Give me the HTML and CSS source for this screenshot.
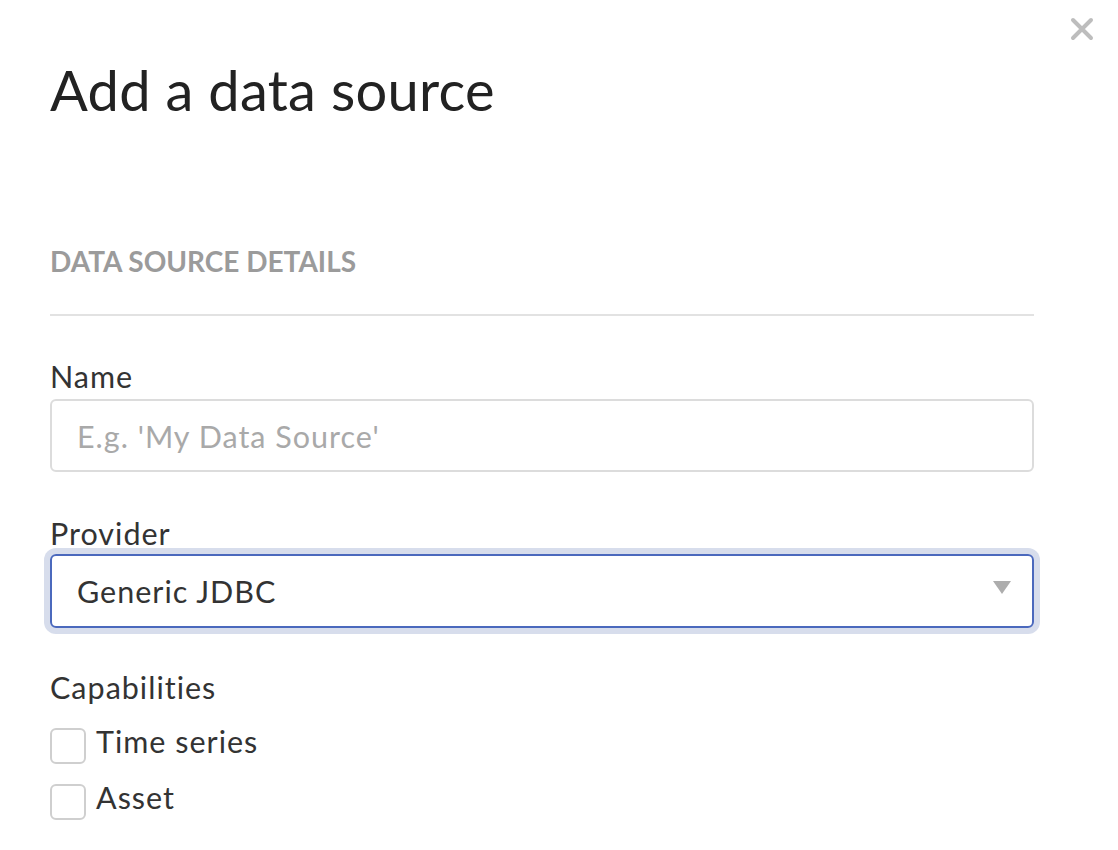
FILE: index.html
```html
<!DOCTYPE html>
<html lang="en">
<head>
<meta charset="utf-8">
<title>Add a data source</title>
<link rel="stylesheet" href="styles.css">
</head>
<body>
<div class="modal">
  <button class="close" aria-label="Close">
    <svg width="24" height="24" viewBox="0 0 24 24"><path d="M3 3 L21 21 M21 3 L3 21" stroke="#bdbdbd" stroke-width="4" stroke-linecap="round" fill="none"/></svg>
  </button>
  <h1 class="title">Add a data source</h1>
  <h2 class="section-title">DATA SOURCE DETAILS</h2>
  <div class="field field-first">
    <label class="label">Name</label>
    <div class="input placeholder">E.g. 'My Data Source'</div>
  </div>
  <div class="field">
    <label class="label">Provider</label>
    <div class="input select">
      <span>Generic JDBC</span>
      <span class="arrow"></span>
    </div>
  </div>
  <div class="field field-caps">
    <label class="label">Capabilities</label>
    <div class="checks">
      <div class="check"><span class="box"></span><span class="check-text">Time series</span></div>
      <div class="check"><span class="box"></span><span class="check-text">Asset</span></div>
    </div>
  </div>
</div>
</body>
</html>
```

FILE: styles.css
```css
html, body {
  margin: 0;
  padding: 0;
  background: #ffffff;
}
body {
  font-family: Lato, "Open Sans", "Liberation Sans", sans-serif;
  color: #333333;
}
.modal {
  position: relative;
  width: 984px;
  padding: 58px 84px 0 50px;
}
.close {
  position: absolute;
  top: 17px;
  left: 1070px;
  width: 24px;
  height: 24px;
  padding: 0;
  border: 0;
  background: none;
}
.close svg { display: block; }
.title {
  margin: 0;
  font-size: 56px;
  line-height: 64px;
  font-weight: 400;
  letter-spacing: 0.3px;
  color: #222222;
}
.section-title {
  margin: 122px 0 0;
  font-size: 28px;
  line-height: 34px;
  font-weight: 700;
  color: #9b9b9b;
  padding-bottom: 36px;
  border-bottom: 2px solid #e2e2e2;
}
.field {
  display: flex;
  flex-direction: column;
  margin-top: 44px;
}
.field-first { margin-top: 43px; }
.field-caps { margin-top: 42px; }
.label {
  font-size: 30.5px;
  line-height: 34px;
  letter-spacing: 1px;
  color: #333333;
}
.input {
  box-sizing: border-box;
  height: 73px;
  margin-top: 6px;
  border: 2px solid #dcdcdc;
  border-radius: 6px;
  padding: 0 25px;
  display: flex;
  align-items: center;
  font-size: 30.5px;
  letter-spacing: 1px;
}
.placeholder { color: #a9a9a9; }
.select {
  margin-top: 4px;
  height: 74px;
  border-color: #4b69bd;
  box-shadow: 0 0 0 6px #d7ddec;
  justify-content: space-between;
  color: #333333;
  padding-right: 21px;
}
.arrow {
  width: 0;
  height: 0;
  border-left: 9px solid transparent;
  border-right: 9px solid transparent;
  border-top: 13px solid #adadad;
  margin-top: -8px;
}
.checks {
  display: flex;
  flex-direction: column;
  gap: 20px;
  margin-top: 24px;
}
.check {
  display: flex;
  align-items: flex-start;
  gap: 10px;
  height: 36px;
  color: #333333;
}
.check-text {
  font-size: 30.5px;
  line-height: 27px;
  letter-spacing: 1px;
}
.box {
  box-sizing: border-box;
  width: 36px;
  height: 36px;
  border: 2px solid #cfcfcf;
  border-radius: 6px;
}
```
